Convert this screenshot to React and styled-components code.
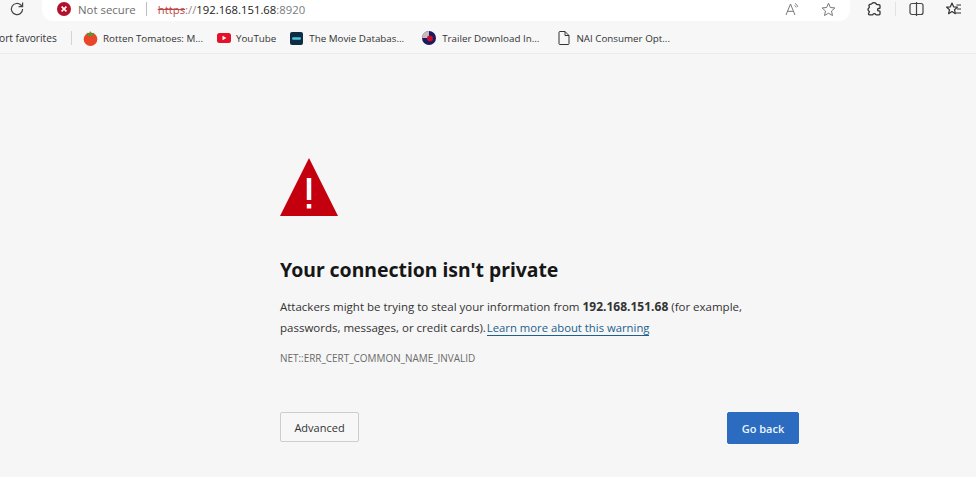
import React from 'react';
import styled, { createGlobalStyle } from 'styled-components';

const Global = createGlobalStyle`
  html, body { margin: 0; padding: 0; background: #f6f6f6; overflow: hidden; }
  body { font-family: "Open Sans", "Noto Sans", "Liberation Sans", sans-serif; }
  * { box-sizing: border-box; }
`;

const Page = styled.div`
  width: 976px;
  height: 477px;
  display: flex;
  flex-direction: column;
  overflow: hidden;
  background: #f6f6f6;
`;

const Toolbar = styled.div`
  height: 22px;
  display: flex;
  align-items: flex-start;
  background: #f7f7f7;
`;

const IconSlot = styled.div`
  width: ${p => p.$w}px;
  height: 18px;
  flex: none;
  display: flex;
  align-items: center;
  justify-content: center;
  color: ${p => p.$color || '#444'};
`;

const AddressBar = styled.div`
  width: 808px;
  height: 21px;
  margin: 0 2px 0 8px;
  padding: 0 0 3px 15px;
  background: #fff;
  border-radius: 0 0 11px 11px;
  display: flex;
  align-items: center;
  flex: none;
  font-size: 11.3px;
`;

const NotSecure = styled.span`
  color: #6d6d6d;
  margin-left: 7px;
  font-size: 11.4px;
`;

const Divider = styled.span`
  width: 1px;
  height: 14px;
  background: #bdbdbd;
  margin: 0 11px 0 10px;
`;

const Scheme = styled.span`
  color: #b3261e;
  text-decoration: line-through;
  opacity: 0.85;
`;

const Slashes = styled.span`
  color: #8a8a8a;
`;

const Host = styled.span`
  color: #222;
`;

const Port = styled.span`
  color: #7b7b7b;
`;

const AddressEnd = styled.div`
  margin-left: auto;
  display: flex;
  align-items: center;
  gap: 15px;
  padding-right: 12px;
`;

const ToolDivider = styled.span`
  width: 1px;
  height: 14px;
  background: #e2e2e2;
  margin: 2px 9px 0 0;
  flex: none;
`;

const BookmarkBar = styled.div`
  height: 32px;
  display: flex;
  align-items: center;
  background: #f7f7f7;
  border-bottom: 1px solid #ececec;
  font-size: 9.8px;
  color: #333;
  white-space: nowrap;
  padding-top: 1px;
`;

const Clipped = styled.span`
  margin-left: -1px;
  width: 59px;
  overflow: hidden;
  font-size: 10.2px;
`;

const BarSep = styled.span`
  width: 1px;
  height: 14px;
  background: #d4d4d4;
  margin: 0 11px 0 13px;
`;

const Bookmark = styled.div`
  display: flex;
  align-items: center;
  gap: ${p => p.$gap || 5}px;
  margin-right: ${p => p.$mr || 0}px;
`;

const Main = styled.main`
  flex: 1;
  padding: 104px 176px 0 280px;
  display: flex;
  flex-direction: column;
`;

const WarnIcon = styled.svg`
  display: block;
  width: 58px;
  height: 59px;
`;

const Title = styled.h1`
  margin: 39px 0 0;
  font-size: 19.4px;
  line-height: 27px;
  font-weight: 700;
  color: #161616;
  font-family: "Noto Sans", "Open Sans", sans-serif;
`;

const Message = styled.p`
  margin: 14px 0 0;
  font-size: 11.5px;
  line-height: 20.5px;
  color: #333;
  width: 480px;

  strong {
    font-size: 12px;
  }
`;

const Learn = styled.a`
  margin-left: -2px;
  font-size: 11.3px;
  color: #1d5f8d;
  border-bottom: 1px solid #1d5f8d;
`;

const ErrorCode = styled.div`
  margin-top: 13px;
  font-size: 9.95px;
  line-height: 14px;
  color: #6a6a6a;
`;

const Buttons = styled.div`
  margin-top: 47px;
  display: flex;
  justify-content: space-between;
  align-items: flex-start;
  width: 519px;
`;

const Button = styled.button`
  height: ${p => (p.$primary ? 32 : 30)}px;
  width: ${p => (p.$primary ? 72 : 79)}px;
  border-radius: 2px;
  border: 1px solid ${p => (p.$primary ? '#2b6cc0' : '#cdcdcd')};
  background: ${p => (p.$primary ? '#2b6cc0' : '#f7f7f7')};
  color: ${p => (p.$primary ? '#eef4fb' : '#333')};
  font-family: inherit;
  font-size: 11px;
  font-weight: ${p => (p.$primary ? 600 : 400)};
  padding: 0;
`;

export default function App() {
  return (
    <Page>
      <Global />
      <Toolbar>
        <IconSlot $w={34}>
          <svg width="16" height="16" viewBox="0 0 16 16" fill="none" stroke="#444" strokeWidth="1.2">
            <path d="M13.6 8a5.6 5.6 0 1 1-1.7-4L13.5 5.6" />
            <path d="M13.6 1.6v4h-4" />
          </svg>
        </IconSlot>
        <AddressBar>
          <svg width="14" height="14" viewBox="0 0 14 14">
            <circle cx="7" cy="7" r="7" fill="#b3102a" />
            <path d="M4.6 4.6l4.8 4.8M9.4 4.6l-4.8 4.8" stroke="#fff" strokeWidth="1.6" />
          </svg>
          <NotSecure>Not secure</NotSecure>
          <Divider />
          <Scheme>https</Scheme>
          <Slashes>://</Slashes>
          <Host>192.168.151.68</Host>
          <Port>:8920</Port>
          <AddressEnd>
            <IconSlot $w={20}>
              <svg width="16" height="14" viewBox="0 0 16 14" fill="none" stroke="#777" strokeWidth="1">
                <path d="M1 13L5.5 2 10 13M2.8 9.3h5.4" />
                <path d="M10 1.5c1.5.7 2.3 1.8 2.7 3.3M9.6 3.6c.9.4 1.3 1 1.6 1.8" />
              </svg>
            </IconSlot>
            <IconSlot $w={20}>
              <svg width="15" height="15" viewBox="0 0 24 24" fill="none" stroke="#777" strokeWidth="1.6" strokeLinejoin="round">
                <path d="M12 2l3 6.8 7.2.7-5.4 4.9 1.6 7.3L12 17.9l-6.4 3.8 1.6-7.3L1.8 9.5 9 8.8z" />
              </svg>
            </IconSlot>
          </AddressEnd>
        </AddressBar>
        <IconSlot $w={43}>
          <svg width="14" height="15" viewBox="0 0 14 15" fill="none" stroke="#333" strokeWidth="1.3" strokeLinejoin="round">
            <path d="M5 1.5c1-1 3-1 4 0 .4.5.3 1.2 1.2 1.2h1.8c.6 0 1 .4 1 1v2.2c0 .6-.8.6-1.4.6-1.4 0-1.4 2.4 0 2.4.6 0 1.4 0 1.4.6v2.3c0 .6-.4 1-1 1H9.4c-.9 0-.7-1-1.7-1.2-1.2-.2-1.8.4-2 1.2H2.5c-.8 0-1.2-.7-1-1.3.2-.7 1-1 .8-2C2.1 8.9 1 8.7 1 7.5 1 6.5 2 6 2.3 5.3 2.6 4.5 1.5 3.8 2 3c.5-.8 2.3-.4 3-1.5z" />
          </svg>
        </IconSlot>
        <ToolDivider />
        <IconSlot $w={22}>
          <svg width="15" height="14" viewBox="0 0 15 14" fill="none" stroke="#444" strokeWidth="1.2">
            <rect x="1" y="1.5" width="13" height="11" rx="2" />
            <path d="M7.5 0v14" />
          </svg>
        </IconSlot>
        <IconSlot $w={54}>
          <svg width="16" height="15" viewBox="0 0 16 15" fill="none" stroke="#333" strokeWidth="1.2" strokeLinejoin="round">
            <path d="M6 1l1.6 3.8 3.9.3-3 2.6.9 4L6 9.6l-3.4 2.1.9-4-3-2.6 3.9-.3z" />
            <path d="M10.5 3H15M11 7h4M10 11h5" />
          </svg>
        </IconSlot>
      </Toolbar>
      <BookmarkBar>
        <Clipped>ort favorites</Clipped>
        <BarSep />
        <Bookmark $mr={14}>
          <svg width="15" height="16" viewBox="0 0 15 16">
            <circle cx="7.5" cy="9.2" r="6.8" fill="#e8452a" />
            <path d="M3.5 2.5l3 1.2L7 .8l1.5 2.7 3-.8-1.7 3H5z" fill="#4f9a35" />
          </svg>
          <span>Rotten Tomatoes: M...</span>
        </Bookmark>
        <Bookmark $mr={14}>
          <svg width="14" height="10" viewBox="0 0 14 10">
            <rect width="14" height="10" rx="2.5" fill="#e3122a" />
            <path d="M5.5 2.8v4.4L9.3 5z" fill="#fff" />
          </svg>
          <span>YouTube</span>
        </Bookmark>
        <Bookmark $mr={18} $gap={6}>
          <svg width="13" height="13" viewBox="0 0 13 13">
            <rect width="13" height="13" rx="2" fill="#0d2d45" />
            <rect x="2" y="5.2" width="9" height="2.6" rx="1.3" fill="#4fc3d8" />
          </svg>
          <span>The Movie Databas...</span>
        </Bookmark>
        <Bookmark $mr={19} $gap={6}>
          <svg width="14" height="14" viewBox="0 0 14 14">
            <circle cx="7" cy="7" r="7" fill="#1a1a5e" />
            <path d="M7 0a7 7 0 0 0-7 7h7z" fill="#c9b8c0" />
            <circle cx="8" cy="7.5" r="3" fill="#c8102e" />
          </svg>
          <span>Trailer Download In...</span>
        </Bookmark>
        <Bookmark $gap={6}>
          <svg width="12" height="14" viewBox="0 0 12 14" fill="none" stroke="#333" strokeWidth="1" strokeLinejoin="round">
            <path d="M1 1.5a1 1 0 0 1 1-1h5l4 4v8a1 1 0 0 1-1 1H2a1 1 0 0 1-1-1z" />
            <path d="M7 .5v4h4" />
          </svg>
          <span>NAI Consumer Opt...</span>
        </Bookmark>
      </BookmarkBar>
      <Main>
        <WarnIcon viewBox="0 0 58 59">
          <path d="M29 0L58 58H0z" fill="#c4000f" />
          <rect x="26.75" y="20" width="4.5" height="22" fill="#fff" />
          <rect x="26.75" y="46" width="4.5" height="4.5" fill="#fff" />
        </WarnIcon>
        <Title>Your connection isn't private</Title>
        <Message>
          Attackers might be trying to steal your information from <strong>192.168.151.68</strong> (for example,{' '}
          passwords, messages, or credit cards). <Learn>Learn more about this warning</Learn>
        </Message>
        <ErrorCode>NET::ERR_CERT_COMMON_NAME_INVALID</ErrorCode>
        <Buttons>
          <Button>Advanced</Button>
          <Button $primary>Go back</Button>
        </Buttons>
      </Main>
    </Page>
  );
}
